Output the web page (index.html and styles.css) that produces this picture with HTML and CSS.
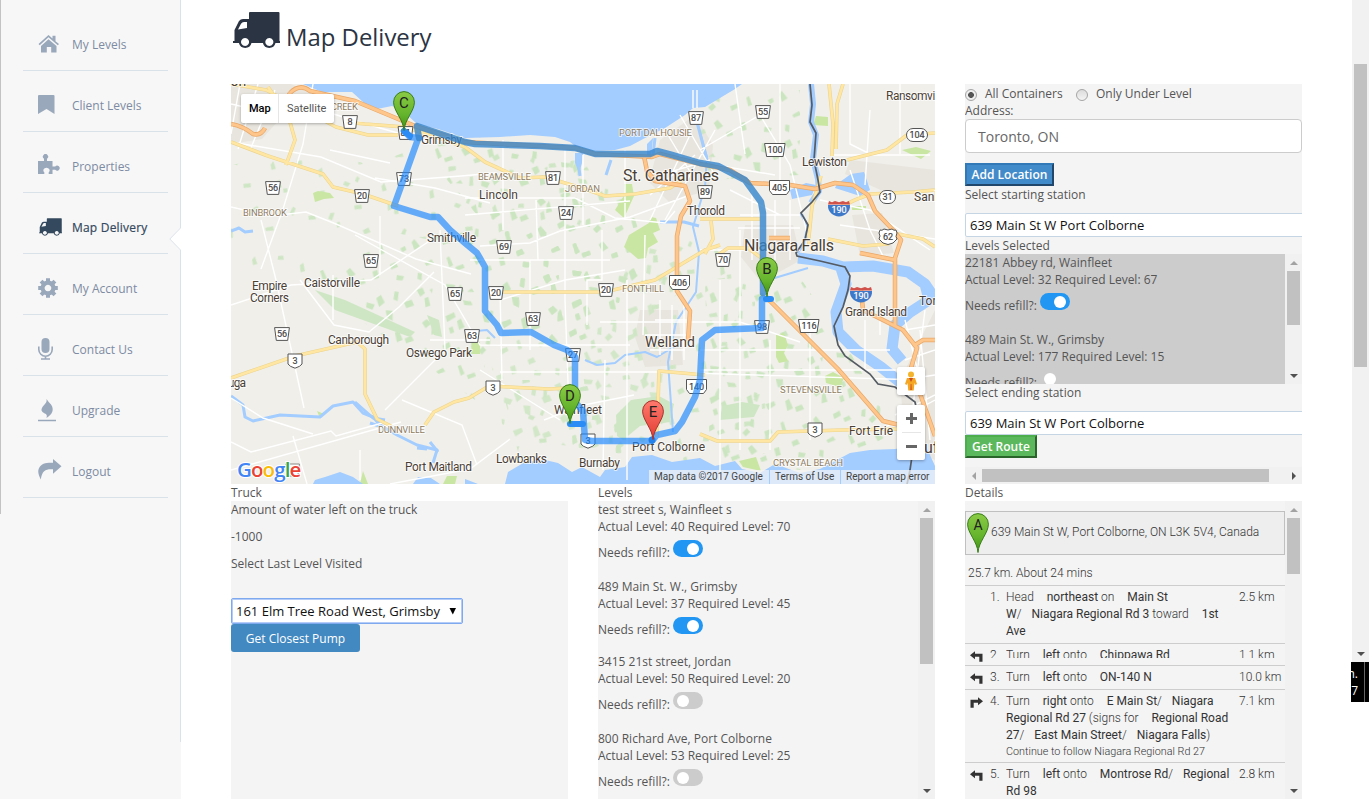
FILE: index.html
```html
<!DOCTYPE html>
<html lang="en">
<head>
<meta charset="utf-8">
<title>Map Delivery</title>
<link rel="stylesheet" href="styles.css">
</head>
<body>
<svg class="defs" width="0" height="0" aria-hidden="true">
  <defs>
    <linearGradient id="gGreen" x1="0" y1="0" x2="0" y2="1"><stop offset="0" stop-color="#8bcb45"/><stop offset=".6" stop-color="#64b32c"/><stop offset="1" stop-color="#3f8f14"/></linearGradient>
    <linearGradient id="gRed" x1="0" y1="0" x2="0" y2="1"><stop offset="0" stop-color="#ff7a6e"/><stop offset="1" stop-color="#e23a30"/></linearGradient>
    <symbol id="pin" viewBox="0 0 22 40" overflow="visible"><path d="M11 39.5C10.500 29 .6 20 .6 11.200a10.400 10.600 0 0 1 20.800 0C21.400 20 11.500 29 11 39.500Z"/></symbol>
    <symbol id="truck" viewBox="0 0 47 38"><path fill-rule="evenodd" d="M17 0h28.500q1 0 1 1v28h1v2h-5a6.500 6.500 0 0 1-12.600 0H18.500a6.500 6.500 0 0 1-12.600 0H0v-2h1.500V18L6 9q1.500-2 4-2h6V1q0-1 1-1zM5 17.500l9-1.500v-6h-3q-2 0-3 1.800zM12 26a4 4 0 1 0 .1 0zm24.300 0a4 4 0 1 0 .1 0z"/></symbol>
    <symbol id="turnL" viewBox="0 0 13 11"><path d="M0 4.300 5 .3v2.400h7.500v8H9.300V5.800H5v2.500z"/></symbol>
  </defs>
</svg>
<div class="page">
  <nav class="sidebar">
    <span class="edge"></span>
    <a class="item"><span class="ico"><svg width="22" height="20"><path d="M.5 10 10.500 1l4 3.500V1.800h3v5.500L21 10l-1.200 1.300-9.300-8-8.800 8zM3 12l7.500-6.800L18.500 12v6.500h-5.300V13H8.800v5.500H3z"/></svg></span>My Levels</a>
    <a class="item"><span class="ico"><svg width="22" height="20"><path d="M1 0h14.500q1 0 1 1v18L8.500 14 0 19V1q0-1 1-1z"/></svg></span>Client Levels</a>
    <a class="item"><span class="ico"><svg class="raise" width="22" height="21"><path d="M0 7h6V4.800a2.600 2.600 0 1 1 3 0V7h5.500v5.500h2.700a2.500 2.500 0 1 1 0 3.200h-2.700V20h-3.800v-1.800q1.300-1 .8-2.700-1-1.800-3-1.800-2.300 0-3 1.800-.5 1.700.8 2.700V20H0z"/></svg></span>Properties</a>
    <a class="item active"><span class="ico"><svg width="23" height="19"><use href="#truck" width="23" height="19"/></svg></span>Map Delivery<svg class="notch" width="12" height="24"><path d="M12 0v24L.7 12z" fill="#fff"/><path d="M11.500 0v1L.8 12l10.700 11v1" fill="none" stroke="#d9e2ea"/></svg></a>
    <a class="item"><span class="ico"><svg width="22" height="20"><g transform="translate(10 10)"><path fill-rule="evenodd" d="M0-7.500a7.500 7.500 0 1 0 .1 0zM0-3.300a3.300 3.300 0 1 1-.1 0z"/><path d="M-2-9.800h4v4h-4zm0 15.600h4v4h-4zM-9.800-2h4v4h-4zm15.600 0h4v4h-4z"/><path transform="rotate(45)" d="M-2-9.800h4v4h-4zm0 15.600h4v4h-4zM-9.800-2h4v4h-4zm15.600 0h4v4h-4z"/></g></svg></span>My Account</a>
    <a class="item"><span class="ico"><svg width="22" height="22"><rect x="3.500" y="0" width="8" height="15" rx="4"/><path d="M.8 8.500v3a6.700 6.700 0 0 0 13.400 0v-3M7.500 18v3M3 21h9" fill="none" stroke="#9aa8bb" stroke-width="1.600"/></svg></span>Contact Us</a>
    <a class="item"><span class="ico"><svg width="22" height="23"><path d="M8.500 0q2 3 4.500 5.500c3.500 5 1.500 10-4.500 13.500q1-2.500-.5-4C4.500 13.500 2.500 12 4 9c1-3 5.500-4.500 4.500-9zM0 20.800h18V22.300H0z"/></svg></span>Upgrade</a>
    <a class="item"><span class="ico"><svg class="raise" width="24" height="21"><path d="M15 0l8.500 7.300L15 14.800v-4.500C8.500 9.800 4 11 2.800 20.500 0 15.500-.8 11 2 7.500 4.500 4 9 3.700 15 3.700z"/></svg></span>Logout</a>
  </nav>

  <main class="main">
    <h1 class="title"><svg width="47" height="38"><use href="#truck" width="47" height="38"/></svg><span>Map Delivery</span></h1>
    <div class="grid">
      <section class="map">
        <svg class="mapsvg" width="704" height="400" viewBox="231 84 704 400">
          <defs>
            <pattern id="vegA" width="127" height="109" patternUnits="userSpaceOnUse" patternTransform="rotate(-6)"><path fill="#cbe5c0" d="M3 5l6-2 2 6-5 3zM10 14l4-1 1 9-5 1zM16 6l3-1-1 5zM33 2l9 2-2 4-7-1zM44 8l3-4 3 7-5 3zM48 20l8 2 1 4-8-1zM53 12l5-3 2 4zM79 12l8 3-3 5-6-3zM89 9l5-3 3 8-6 4zM97 22l7 1-1 10-5-3zM108 4l4 1-2 9-4-2zM116 16l8-2 2 6-8 2zM5 38l5-3 4 5-6 4zM14 43l3-4 2 11-6 1zM29 34l9-3 1 5-9 4zM40 40l4-2 3 9-6 2zM31 46l4-1 1 6-4 1zM66 37l5-2 1 10-5-1zM74 33l3 1-1 5-3-1zM84 46l9-2 1 4-8 4zM104 45l4-2 3 10-6 2zM113 52l7-2 2 5-8 2zM3 66l3-3 5 8-6 3zM23 63l7-3 1 5-7 3zM33 68l6-2 2 4-7 2zM52 62l4-1-1 8-4-1zM58 72l5-4 3 4-5 4zM68 59l3 1-1 8-4-2zM80 73l7-2 1 4-7 3zM97 66l3-1 2 9-4 1zM118 71l5-2 1 4-4 2zM14 88l7-3 2 4-8 2zM6 97l4 1-1 7-4-2zM36 85l3-1 3 9-4 2zM44 95l8-2 1 4-8 2zM62 88l4-3 5 7-6 3zM73 99l6-2 1 5-6 1zM88 91l5-1 1 8-5 1zM106 86l6-2 2 5-7 2zM112 97l7 2-2 4-6-1z"/></pattern>
            <pattern id="vegB" width="113" height="97" patternUnits="userSpaceOnUse" patternTransform="rotate(11)"><path fill="#cfe6c5" d="M6 9l3-3 3 8-4 2zM34 15l6 1-2 4-5-1zM45 8l3 1-1 5-3-1zM71 13l2-4 4 7-4 2zM96 4l5-1 1 4-6 1zM12 29l4-1 2 7-5 1zM48 37l7-2 1 4-7 2zM80 28l3-2 3 7-4 3zM88 34l4-1 1 4-4 1zM5 56l6-2 2 4-7 2zM26 49l4-1-1 8-4-1zM34 57l3-1 1 5-3 1zM61 60l5-4 3 4-5 4zM101 50l3 1-1 8-4-2zM20 78l7-2 1 4-7 3zM43 84l3-1 2 9-4 1zM78 76l7-3 2 4-8 2z"/></pattern>
            <symbol id="reg" viewBox="0 0 16 14"><path d="M.6.6h14.800L13.700 13.400H2.300z" fill="#fff" stroke="#555" stroke-width="1"/></symbol>
            <symbol id="king" viewBox="0 0 16 16"><path d="M1 1h14v10q-1.500 2.500-7 4.200Q2.500 13.500 1 11z" fill="#fff" stroke="#555"/></symbol>
            <symbol id="inter" viewBox="0 0 24 17"><path d="M1 5h22c.5 7-5 11-11 11.500C6 16 .5 12 1 5z" fill="#3e78c9"/><path d="M1 4.500 2 1l3 1.200L8 1l4 1.200L16 1l3 1.200L22 1l1 3.500z" fill="#d0504a"/></symbol>
            <path id="yellow" d="M231 142l37 14 55 18 10 13 30 7 35 12M286 165l9-25-7-25-20-28M231 84l35 6 70 37 32 8 30 0M345 122l20 2 40 3 60 20 20 15 35 16 25-1 40 12 20 7 30-2 35-6 15-10M231 378l64-22 62-14 8 7 0 45 12 25 14 7M425 425l9-13 20-10 15-4 20-12 60 3 20-1M700 434l17 7h53l8-9 65-2 55-1M490 292h115l50-12 50-30 15-5M657 437l2-66 46 4M700 219h60M705 254l8-15-2-18M718 255l10-7h20l20 15M829 84l4 40-1 32M843 84l-6 20-1 45M847 160l40-10 20-15 28-2M935 190l-22 2-43 2-15 6-17 8M935 247l-12-8-25-5-10 10-25 2-35-7M821 176l-9 30-3 30 0 10"/>
            <path id="orange" d="M231 124q12 2 22 10 8 2 12-6M290 93q10-10 20-2l45 10 60 25 50 16 75 4 35 2 20 6 57 3 8-3 40 10 30 6 20 13 40 2 25 4 20-6 18 2 15 10 7 16 18 19 8 10-6 18v68M644 156l3 15 8 10 30 5 5 15-9 15-4 20v55l13 20-2 30M768 299l20 20 50 50 45 52 25 6M861 290l2 20 40 20 14 18-6 20 24 68M915 345l8-5h12M769 238h21M860 253l35 7M290 93l-7 14"/>
          </defs>
          <rect x="231" y="84" width="704" height="400" fill="#f0efea"/>
          <g fill="#e8e5de">
            <path d="M231 84h60l22 10-8 12-18 5-25 28-31 5zM660 140l35-25 18 30-4 45-40 12-20-20zM745 225h48l8 35-40 22-20-25zM640 310h38l5 55-38 2-10-30zM850 160l85 10v20l-50 2-40-18zM900 380l35-70v150l-30-15zM852 215l30-2 12 40-34 3z"/>
          </g>
          <g>
            <path d="M231 165l80-15 60 15 80-30 60 5 80 12 20 50-20 40-70-8-70 10-60-12-70 5-50 15-40-10z" fill="url(#vegB)"/>
            <path d="M310 275l80-35 90-25 110 25-5 110-90-20-20 70-70-50-90-60z" fill="url(#vegA)"/>
            <path d="M400 125l195 30 45 60 5 70-25 30-80-15-50-70z" fill="url(#vegA)"/>
            <path d="M600 270l85-35 70 30v80l30 100-60 25-150-10-20-60z" fill="url(#vegB)"/>
            <path d="M560 210h80l50 75-40 30 25 110-60 25-110-10-20-110z" fill="url(#vegA)" opacity=".8"/>
            <path d="M690 90h110v85l-90 5zM705 280l90-10 60 90 40 75-95 35-90-10z" fill="url(#vegA)"/>
            <path d="M231 220l60 30 40 10-30 20-50-10zM500 380h90l70 80-140 0z" fill="url(#vegB)"/>
          </g>
          <g fill="#cfe6c5"><path d="M616 415l15-15 28-4 15 8-4 18-30 4-17 14-6-4zM722 406l20-4 18 3-6 12-34 3zM315 290l30 10 70 32-5 5-75-27zM427 315l12 5 3 17-8-2z"/></g>
          <g fill="#c9e6a3"><path d="M629 235l20-12 2-6 5 1 4 12-7 3 5 9-10 6-2 10-8 1-14-12zM615 210l10-16-1-10h8l2 12-10 22zM776 335l8-2 4 12-4 8 4 8-9 2-3-6zM825 376l8-4 11 6-4 9-14-4zM902 150l14-3 15 4-10 8zM739 461l17-4 5 14-18-4zM447 476h10l-2 8h-12zM363 471l5 13h-8zM317 411l7 3-4 4zM816 116l12 1v9l-15-1zM313 193l5-2 12 2 4 5-10 1-9 3zM472 342h8v12h-9zM852 206h14v4h-14z"/></g>

          <g fill="#a3ccff">
            <path d="M303 84l19 8h30l10 9 10 9 20-4 10 4 15 14 21 5 27 9 35-1 30-2 25 2 15 5 10 8 15 1 20-1 15-4 15-8 20-10 20-13 8-7 12-1 15-9 15-9 7-5z"/>
            <path d="M505 484l3-12 17-10 20-2 13 3 14 9 10-5 18 10 5-7 20-3 7-10 20-2 20 7 28-4 15 8 20-5 7 8 18 4 15-9 25 9 20-4 30-16 20-3 25-1 30-5 10 22v18z"/>
            <path d="M313 484l2-4 10-3 15-5 13 5 10 7zM413 484l5-7 13 1 9 6zM465 479l13 5h-13zM837 184l14-10 13-2 6 18-10 6-25-8zM790 190l16-7 10 2-4 10-20 4zM575 153h8l-1 10-3 10-4-10zM647 144l6-6-2 20-4-2z"/>
          </g>
          <g fill="none" stroke="#a3ccff" stroke-linejoin="round">
            <path stroke-width="3" d="M231 396l12 9 2 12 8 4 27-6 40 2 13-11 20-4 10 11 10 4 7 8 17 10 20 10 20 5-4 13"/>
            <path stroke-width="3" d="M355 402l18 16 12 2M370 423l12 4M417 448l10 1M430 442l8 10M231 231l8-3 6 4 8-1M611 160l-5 15M578 160l2 16M655 138l-2 17M697 122l10 38M660 222h24l15 4"/>
            <path stroke-width="6" d="M811 84l2 20-2 18 5 13-3 24 5 20 1 12-8 12"/>
            <path stroke-width="3" d="M801 213l7 14-4 17-7 9"/>
            <path stroke-width="11" d="M798 258l25 3 20 6 30-1 35 6 17 12 10 15M841 268l5 16-10 28 2 20 18 18 25 17 25 20M925 284l4 16-20 13-14 12-3 24 10 12"/>
            <path stroke-width="2" d="M697 122l10 35-2 30-12 40 6 25-3 40-20 30-8 40 5 70M495 338l-8-8-22 2M585 360l12 5 18-2 10-8 20-3 12 5 20-12M768 280l40-12"/>
          </g>

          <g fill="none" stroke="#fff" stroke-width="1.400">
            <path d="M231 104l60 14M240 84l-9 50M258 84l-20 65M275 90l-25 60M231 142l90 15 60 25 80-6 34-3M313 84l-10 60-20 65-22 60M231 207l40 9 35-4 30 12 80 35 55 15M320 110l60 18 50 14M330 150l60 13M375 178l60 10 55 15M231 305l60-20 80-5 60-40M261 220l15 60 28 128M300 280l34 45 35 7 30-25 35-35M333 275v45M380 216v59M355 235l90 50 35 60 90 1M440 230l5 120-60 60M430 340h60M231 398l32 20 50 16M231 442l20 10 80-21 5 5 50-14M293 436l14 48M231 470l170-48M390 484l80-15 40-30M402 400l60 25 15 40M480 370l80 50M360 450v30"/>
            <path d="M503 140v90M536 200l2 60M565 150v150l4 110M583 155v70M625 150v70M465 215l165-14M480 246l50-3 30-12 70-14 60-22M465 198h110l40 20 50 5 10-12M500 290l2 90M530 260v90M500 300l65-20 60-10M500 372h160l260 8M602 230v50h-15v45M645 235l-2 100M500 345h130M470 260h140M600 322h140l60 20M627 280v200M544 420l40-15 50-10M605 360l-2 110M720 280v200M740 230v220M700 350h190M700 370h210M810 320v120M770 340v110M700 250h100M700 150l60-35 30 50 20 80M780 84v100M735 84l10 70M715 165l60 10M660 175l50-15M650 195l45-40M680 115l35 60M665 130l30 50M650 220l40-85M665 220l50-90M655 320h35M645 335h45M650 350h35M660 300v55M672 305v55M684 300v60M730 190l50 25M740 215h60M738 228h62M752 190v70M775 200v60M790 200v60M850 170l20 60 15 30M850 84v60l20 10M830 155h100M870 110l-5 75M900 84v70M820 200l50 10 60 40M840 225l95 14M850 310h30v25M865 320v50M905 320l15 60M925 310l-15 120M935 325l-30 5M935 350l-30 10M935 375l-20 3M880 430l55-30M935 395l-40 20M920 330l10 110M693 108v-18M697 108v-18"/>
          </g>
          <g fill="none" stroke-linejoin="round">
            <use href="#yellow" stroke="#ecd38c" stroke-width="3.600"/>
            <use href="#yellow" stroke="#ffe7a3" stroke-width="2.500"/>
            <use href="#orange" stroke="#e9a868" stroke-width="4.500"/>
            <use href="#orange" stroke="#ffc68c" stroke-width="3"/>
          </g>
          <path fill="none" stroke="#555b63" stroke-width="1.700" d="M810 84l2 21-2 17 6 11-2 27 4 20 2 12-8 10-11 11 7 12-3 15-9 13 1 3 23 5 25 6 5 9-2 14-5 17-9 19 4 19 7 11 25 18 8 10 17 3 20 15 3 13-8 55-5 24"/>

          <g font-family="Roboto, sans-serif" font-size="12" fill="#4a4036" stroke="#fff" stroke-width="2" stroke-opacity=".7" paint-order="stroke" stroke-linejoin="round">
            <g font-size="16">
              <text x="623" y="181" textLength="96">St. Catharines</text><text x="744" y="251" textLength="90">Niagara Falls</text><text x="645" y="347" font-size="14" textLength="50">Welland</text><text x="924" y="453">uffalo</text><text x="226" y="86" font-size="14">ton</text>
            </g>
            <text x="421" y="144" textLength="41">Grimsby</text><text x="479" y="199" textLength="39">Lincoln</text><text x="427" y="242" textLength="49">Smithville</text><text x="304" y="287" textLength="56">Caistorville</text><text x="252" y="290" textLength="35">Empire</text><text x="250" y="302" textLength="39">Corners</text><text x="328" y="344" textLength="61">Canborough</text><text x="406" y="357" textLength="66">Oswego Park</text><text x="228" y="387" textLength="18">uga</text><text x="405" y="471" textLength="67">Port Maitland</text><text x="496" y="463" textLength="51">Lowbanks</text><text x="579" y="467" textLength="41">Burnaby</text><text x="554" y="414" textLength="48">Wainfleet</text><text x="632" y="451" textLength="73">Port Colborne</text><text x="687" y="215" textLength="38">Thorold</text><text x="802" y="166" textLength="45">Lewiston</text><text x="886" y="100" textLength="60">Ransomville</text><text x="914" y="201">Sanborn</text><text x="845" y="316" textLength="62">Grand Island</text><text x="919" y="305">Tonawanda</text><text x="849" y="435" textLength="44">Fort Erie</text>
            <g font-size="9.500" fill="#8f7d63">
              <text x="331" y="110" textLength="27">CREEK</text><text x="243" y="216" textLength="44">BINBROOK</text><text x="478" y="180" textLength="53">BEAMSVILLE</text><text x="565" y="192" textLength="35">JORDAN</text><text x="619" y="136" textLength="73">PORT DALHOUSIE</text><text x="622" y="292" textLength="42">FONTHILL</text><text x="378" y="433" textLength="47">DUNNVILLE</text><text x="780" y="393" textLength="62">STEVENSVILLE</text><text x="773" y="466" textLength="70">CRYSTAL BEACH</text>
            </g>
          </g>

          <g>
            <use href="#reg" x="342" y="115" width="16" height="14"/><use href="#reg" x="397" y="126" width="17" height="14"/><use href="#reg" x="396" y="172" width="16" height="14"/><use href="#reg" x="354" y="189" width="16" height="14"/><use href="#reg" x="265" y="181" width="16" height="14"/><use href="#reg" x="363" y="254" width="16" height="14"/><use href="#reg" x="496" y="240" width="16" height="14"/><use href="#reg" x="447" y="287" width="16" height="14"/><use href="#reg" x="488" y="286" width="16" height="14"/><use href="#reg" x="525" y="312" width="16" height="14"/><use href="#reg" x="464" y="329" width="16" height="14"/><use href="#reg" x="565" y="348" width="16" height="14"/><use href="#reg" x="545" y="171" width="16" height="14"/><use href="#reg" x="558" y="206" width="16" height="14"/><use href="#reg" x="688" y="111" width="16" height="14"/><use href="#reg" x="755" y="105" width="16" height="14"/><use href="#reg" x="697" y="185" width="16" height="14"/><use href="#reg" x="715" y="253" width="16" height="14"/><use href="#reg" x="598" y="283" width="16" height="14"/><use href="#reg" x="754" y="320" width="16" height="14"/><use href="#reg" x="274" y="327" width="16" height="14"/>
            <path d="M764.600 143.500h20.500l-2 13h-16.500zM798.500 319.500h20.500l-2 13h-16.500z" fill="#fff" stroke="#555"/>
            <use href="#king" x="287" y="353" width="16" height="16"/><use href="#king" x="485" y="380" width="16" height="16"/><use href="#king" x="580" y="433" width="16" height="16"/><use href="#king" x="807" y="422" width="16" height="16"/><use href="#reg" x="285" y="463" width="15" height="14" opacity=".7"/>
            <path d="M769.500 180.500h20v10l-3 4h-14l-3-4zM669.500 275.500h20v10l-3 4h-14l-3-4zM686.500 379.500h20v10l-3 4h-14l-3-4z" fill="#fff" stroke="#555"/>
            <rect x="906.500" y="128.500" width="21" height="13" rx="6.500" fill="#fff" stroke="#555"/><rect x="879.500" y="190.500" width="16" height="13" rx="6.500" fill="#fff" stroke="#555"/>
            <path d="M880 230q2 1 4-1 4 2 8 0 2 2 4 1l1 3q-2 4 0 6l-4 4-5 1.500-5-1.500-4-4q2-3 0-6z" fill="#fff" stroke="#555"/>
            <use href="#inter" x="827" y="200" width="24" height="17"/><use href="#inter" x="849" y="286" width="24" height="17"/>
          </g>
          <g font-family="Roboto, sans-serif" font-size="9" fill="#444" text-anchor="middle" stroke="#444" stroke-width=".2">
            <text x="350" y="125">8</text><text x="405.500" y="136">81</text><text x="404" y="182">73</text><text x="362" y="199">20</text><text x="273" y="191">56</text><text x="371" y="264">65</text><text x="504" y="250">69</text><text x="455" y="297">65</text><text x="496" y="296">20</text><text x="533" y="322">63</text><text x="472" y="339">63</text><text x="573" y="358">27</text><text x="553" y="181">81</text><text x="566" y="216">24</text><text x="696" y="121">87</text><text x="763" y="115">55</text><text x="705" y="195">89</text><text x="723" y="263">70</text><text x="606" y="293">20</text><text x="762" y="330">98</text><text x="282" y="337">56</text><text x="775" y="153">100</text><text x="809" y="329">116</text><text x="295" y="364">3</text><text x="493" y="391">3</text><text x="588" y="444">3</text><text x="815" y="433">3</text><text x="779.500" y="191">405</text><text x="679.500" y="286">406</text><text x="696.500" y="390">140</text><text x="917" y="138">104</text><text x="887.500" y="200">31</text><text x="888" y="240">62</text>
            <g fill="#fff" stroke="#fff"><text x="839" y="213">190</text><text x="861" y="299">190</text></g>
          </g>
          <g fill="none" stroke="#1e88ff" stroke-linejoin="round" stroke-linecap="round" stroke-width="6.500">
            <path opacity=".67" d="M404 131l6 6 9 1M768 299h-6v29l-47 2-13 10-2 40-5 17-13 25-7 9-18 4-5 6h-60l-7-1-2-29-8-9v-45l-8-7-13-5-23-13-30 1-4-8-12-14V267l-8-14-12-10-15-13-12-13h-8l-36-11 24-67"/>
            <path stroke="#3484cc" opacity=".8" d="M419 138l-2-12 48 16 10 2 65 2 35 2 20 6h55l7-3 15 4 28 8 18 3 27 14 16 22 2 11v80"/>
          </g>
          <path fill="none" stroke="#2b8cf5" stroke-linecap="round" stroke-width="6" d="M404 131l6 5M766 299h5M570 424h13"/><circle cx="652" cy="440" r="3.500" fill="#2582ea"/>
          <g stroke-width="1">
            <g fill="url(#gGreen)" stroke="#387d18"><use href="#pin" x="393" y="91" width="22" height="40"/><use href="#pin" x="756" y="257" width="22" height="40"/><use href="#pin" x="559" y="384" width="22" height="40"/></g>
            <use href="#pin" x="642" y="400" width="22" height="40" fill="url(#gRed)" stroke="#a6322c"/>
          </g>
          <g font-family="Roboto, sans-serif" font-size="15" fill="#222" text-anchor="middle"><text x="404" y="108">C</text><text x="767" y="274">B</text><text x="570" y="401">D</text><text x="653" y="417">E</text></g>
          <text x="237" y="477" font-family="'Open Sans', sans-serif" font-size="20.500" font-weight="600" letter-spacing="-.9" stroke="#fff" stroke-width="2" paint-order="stroke"><tspan fill="#4285f4">G</tspan><tspan fill="#ea4335">o</tspan><tspan fill="#fbbc05">o</tspan><tspan fill="#4285f4">g</tspan><tspan fill="#34a853">l</tspan><tspan fill="#ea4335">e</tspan></text>
        </svg>
        <div class="maptype"><b>Map</b><span>Satellite</span></div>
        <div class="pegman"><svg width="14" height="20" viewBox="0 0 14 20"><circle cx="7" cy="3.500" r="3" fill="#f5b32b"/><path d="M3 7h8l2 6-1.500 1-1-2-.8 7.500H4.300L3.500 12l-1 2L1 13z" fill="#f5a623"/><path d="M5 7h4l-2 4zM6.700 13h.7l.3 6H6.400z" fill="#c74a25"/></svg></div>
        <div class="zoomer"><i class="plus"></i><i class="rule"></i><i class="minus"></i></div>
        <div class="credits"><span>Map data ©2017 Google</span><span>Terms of Use</span><span>Report a map error</span></div>
      </section>

      <section class="form">
        <div class="radios"><i class="radio on"></i><span class="r1">All Containers</span><i class="radio"></i><span>Only Under Level</span></div>
        <div>Address:</div>
        <div class="input">Toronto, ON</div>
        <div class="btn blue">Add Location</div>
        <div class="start">Select starting station</div>
        <div class="select wide">639 Main St W Port Colborne</div>
        <div>Levels Selected</div>
        <div class="selected">
          <div class="scrolled">
            <div class="level"><div>22181 Abbey rd, Wainfleet</div><div>Actual Level: 32 Required Level: 67</div><div class="refill">Needs refill?: <i class="toggle on"></i></div></div>
            <div class="level"><div>489 Main St. W., Grimsby</div><div>Actual Level: 177 Required Level: 15</div><div class="refill">Needs refill?: <i class="toggle"></i></div></div>
          </div>
          <div class="vbar"><i class="up"></i><i class="thumb t54"></i><i class="down"></i></div>
        </div>
        <div>Select ending station</div>
        <div class="select wide">639 Main St W Port Colborne</div>
        <div class="btn green">Get Route</div>
        <div class="hbar"><i class="left"></i><i class="hthumb"></i><i class="right"></i></div>
      </section>

      <section class="col">
        <div>Truck</div>
        <div class="panel truck">
          <p>Amount of water left on the truck</p><p>-1000</p><p>Select Last Level Visited</p>
          <div class="select focus">161 Elm Tree Road West, Grimsby<svg width="8" height="7"><path d="M.5 0h6.500L3.800 6.500z"/></svg></div>
          <div class="pump">Get Closest Pump</div>
        </div>
      </section>

      <section class="col">
        <div>Levels</div>
        <div class="panel split">
          <div class="scrolled">
            <div class="level"><div>test street s, Wainfleet s</div><div>Actual Level: 40 Required Level: 70</div><div class="refill">Needs refill?: <i class="toggle on"></i></div></div>
            <div class="level short"><div>489 Main St. W., Grimsby</div><div>Actual Level: 37 Required Level: 45</div><div class="refill">Needs refill?: <i class="toggle on"></i></div></div>
            <div class="level"><div>3415 21st street, Jordan</div><div>Actual Level: 50 Required Level: 20</div><div class="refill">Needs refill?: <i class="toggle"></i></div></div>
            <div class="level"><div>800 Richard Ave, Port Colborne</div><div>Actual Level: 53 Required Level: 25</div><div class="refill">Needs refill?: <i class="toggle"></i></div></div>
          </div>
          <div class="vbar"><i class="up"></i><i class="thumb t146"></i><i class="down"></i></div>
        </div>
      </section>

      <section class="col">
        <div>Details</div>
        <div class="panel split">
          <div class="scrolled directions">
            <div class="stop"><svg width="22" height="40"><use href="#pin" width="22" height="40" fill="url(#gGreen)" stroke="#387d18"/><text x="11" y="17" text-anchor="middle" font-size="14" fill="#222">A</text></svg><span>639 Main St W, Port Colborne, ON L3K 5V4, Canada</span></div>
            <div class="summary">25.7 km. About 24 mins</div>
            <div class="step"><span class="turn"></span><span class="num">1.</span><span class="txt">Head <b>northeast</b> on <b>Main St<br></b><b class="flush">W</b>/<b>Niagara Regional Rd 3</b> toward <b>1st<br></b><b class="flush">Ave</b></span><span class="dist">2.5 km</span></div>
            <div class="step cut"><span class="turn"><svg width="13" height="11"><use href="#turnL"/></svg></span><span class="num">2.</span><span class="txt">Turn <b>left</b> onto <b>Chippawa Rd</b></span><span class="dist">1.1 km</span></div>
            <div class="step"><span class="turn"><svg width="13" height="11"><use href="#turnL"/></svg></span><span class="num">3.</span><span class="txt">Turn <b>left</b> onto <b>ON-140 N</b></span><span class="dist">10.0 km</span></div>
            <div class="step"><span class="turn flip"><svg width="13" height="11"><use href="#turnL"/></svg></span><span class="num">4.</span><span class="txt">Turn <b>right</b> onto <b>E Main St</b>/<b>Niagara<br></b><b class="flush">Regional Rd 27</b> (signs for <b>Regional Road<br></b><b class="flush">27</b>/<b>East Main Street</b>/<b>Niagara Falls</b>)<small>Continue to follow Niagara Regional Rd 27</small></span><span class="dist">7.1 km</span></div>
            <div class="step"><span class="turn"><svg width="13" height="11"><use href="#turnL"/></svg></span><span class="num">5.</span><span class="txt">Turn <b>left</b> onto <b>Montrose Rd</b>/<b>Regional<br></b><b class="flush">Rd 98</b></span><span class="dist">2.8 km</span></div>
          </div>
          <div class="vbar"><i class="up"></i><i class="thumb t56"></i><i class="down"></i></div>
        </div>
      </section>
    </div>
  </main>
  <aside class="pagebar"><div class="track"><i class="bigthumb"></i><i class="down"></i></div><div class="clock"><span>n.</span><span>7</span></div></aside>
</div>
</body>
</html>
```
FILE: styles.css
```css
* { box-sizing: border-box; }
body { margin: 0; background: #fff; color: #555; font: 12px/17px "Open Sans", sans-serif; overflow: hidden; }
.defs { position: absolute; }
svg { display: block; }
i { font-style: normal; }
.page { display: flex; width: 1369px; height: 799px; overflow: hidden; }

/* sidebar */
.sidebar { position: relative; flex: none; width: 181px; height: 799px; padding: 10px 13px 0 23px; background: linear-gradient(#d9e2ea, #d9e2ea) right top / 1px 742px no-repeat #f7f7f7; }
.edge { position: absolute; left: 0; top: 0; width: 1px; height: 514px; background: #c3c3c3; }
.item { position: relative; display: flex; align-items: center; height: 61px; padding: 8px 0 0 15px; border-bottom: 1px solid #d9e1e9; color: #7d8ba3; white-space: nowrap; }
.ico { width: 34px; }
.ico svg { fill: #9aa8bb; }
.ico .raise { margin-top: -3px; }
.active { color: #34495e; font-weight: 500; letter-spacing: .2px; -webkit-text-stroke: .2px #34495e; }
.active .ico svg { fill: #34495e; margin-left: 1px; }
.notch { position: absolute; right: -13px; top: 34px; }

/* content */
.main { width: 1170px; padding-left: 50px; flex: none; }
.title { display: flex; align-items: flex-start; gap: 6px; height: 84px; margin: 0; padding: 12px 0 0 2px; color: #2b3443; font-size: 23.900px; font-weight: 400; line-height: 50px; }
.title svg { fill: #2b3443; }
.grid { display: grid; grid-template-columns: 337px 337px 337px; grid-template-rows: 400px 315px; column-gap: 30px; }
.map { grid-column: span 2; position: relative; width: 704px; height: 400px; overflow: hidden; font-family: Roboto, sans-serif; }
.maptype { position: absolute; left: 10px; top: 10px; display: flex; height: 29px; background: #fff; border-radius: 2px; box-shadow: 0 1px 3px rgba(0,0,0,.3); line-height: 29px; font-size: 11px; color: #565656; }
.maptype b { width: 38px; padding-left: 8px; color: #000; font-weight: 500; border-right: 1px solid #e6e6e6; }
.maptype span { width: 55px; padding-left: 8px; }
.pegman, .zoomer { position: absolute; right: 10px; width: 28px; background: #fff; border-radius: 2px; box-shadow: 0 1px 3px rgba(0,0,0,.3); display: flex; align-items: center; }
.pegman { top: 283px; height: 28px; justify-content: center; }
.zoomer { top: 321px; height: 55px; flex-direction: column; justify-content: space-between; padding: 8px 0; }
.plus, .minus { width: 11px; height: 11px; background: linear-gradient(#666, #666) center / 11px 3px no-repeat; }
.plus { background: linear-gradient(#666, #666) center / 11px 3px no-repeat, linear-gradient(#666, #666) center / 3px 11px no-repeat; }
.rule { width: 19px; height: 1px; background: #e6e6e6; }
.credits { position: absolute; right: 0; bottom: 0; display: flex; height: 14px; line-height: 14px; font-size: 10px; color: #444; background: rgba(245,245,245,.7); white-space: nowrap; }
.credits span { padding-left: 5px; border-right: 1px solid #a3ccff; }
.credits span:nth-child(1) { width: 121px; }
.credits span:nth-child(2) { width: 71px; }
.credits span:nth-child(3) { width: 94px; border: 0; }

.form { width: 337px; height: 400px; background: #f4f4f4; overflow: hidden; display: flex; flex-direction: column; }
.form > div { flex: none; }
.radios { display: flex; align-items: center; height: 18px; }
.radio { width: 12px; height: 12px; margin: 3px 8px 0 0; border: 1px solid #a5a5a5; border-radius: 50%; background: linear-gradient(#dcdcdc, #f4f4f4); }
.radio.on { background: radial-gradient(circle, #555 0 2.600px, #eee 3.200px); }
.r1 { width: 91px; }
.input { height: 34px; padding: 0 12px; border: 1px solid #ccc; border-radius: 4px; background: #fff; font-size: 14px; line-height: 34px; color: #666; }
.btn { display: flex; align-items: center; justify-content: center; height: 23px; color: #fff; font-weight: 600; border: 2px solid; }
.blue { width: 89px; margin-top: 10px; background: #428bca; border-color: #3279b7 #21486b #21486b #3279b7; }
.green { width: 72px; background: #5cb85c; border-color: #4cae4c #2b642b #2b642b #4cae4c; }
.select { height: 24px; padding-left: 4px; background: #fff; border: 1px solid #c5d5e4; border-radius: 2px; color: #111; font-size: 13px; line-height: 23px; white-space: nowrap; }
.wide { width: 345px; margin-top: 10px; }
.start { height: 17px; }
.selected, .split { display: flex; }
.selected { height: 130px; background: #ccc; }
.scrolled { flex: 1; overflow: hidden; }
.level { height: 77px; }
.level.short { height: 75px; }
.refill { display: flex; height: 26px; line-height: 36px; }
.toggle { display: block; width: 30px; height: 17px; margin: 5px 0 0 3px; padding: 2.500px 0 0 4px; border-radius: 9px; background: #ccc; }
.toggle::before { content: ""; display: block; width: 12px; height: 12px; border-radius: 50%; background: #fff; }
.toggle.on { padding-left: 14px; background: #2196f3; }
.vbar { width: 17px; flex: none; display: flex; flex-direction: column; align-items: center; background: #f1f1f1; }
.thumb { width: 13px; background: #c1c1c1; }
.t54 { height: 54px; }
.t56 { height: 56px; }
.t146 { height: 146px; }
.up, .down, .left, .right { width: 17px; height: 17px; display: flex; align-items: center; justify-content: center; }
.up::before, .down::before, .left::before, .right::before { content: ""; border: 4px solid transparent; }
.up::before { border-bottom-color: #a3a3a3; border-top: 0; }
.down { margin-top: auto; }
.down::before { border-top-color: #505050; border-bottom: 0; }
.left::before { border-right-color: #a3a3a3; border-left: 0; }
.right { margin-left: auto; }
.right::before { border-left-color: #505050; border-right: 0; }
.hbar { display: flex; align-items: center; height: 17px; margin-top: auto; background: #f1f1f1; }
.hthumb { width: 287px; height: 13px; background: #c1c1c1; }

.panel { height: 298px; background: #f4f4f4; overflow: hidden; }
.truck p { margin: 0 0 10px; }
.focus { display: flex; align-items: center; justify-content: space-between; width: 232px; height: 26px; margin-top: 26px; padding-right: 5px; border: 1px solid #7ea9ef; box-shadow: inset 0 0 0 1px #b3cdf8; }
.pump { width: 129px; height: 28px; border-radius: 3px; background: #4289c1; color: #fff; font-weight: 500; line-height: 29px; text-align: center; }

/* directions */
.directions { font-family: Roboto, sans-serif; font-weight: 300; color: #333; }
.directions b { font-weight: 400; padding-left: 10px; }
.directions b.flush { padding-left: 0; }
.stop { display: flex; align-items: center; height: 44px; margin-top: 10px; padding: 0 0 1px 1px; border: 1px solid silver; background: #eee; }
.stop span { margin-left: 2px; }
.stop text { font-weight: 400; }
.summary { height: 30px; padding: 10px 3px 0; }
.step { display: flex; padding: 3px 0 3px 5px; border-top: 1px solid #cdcdcd; white-space: nowrap; }
.turn { width: 20px; padding-top: 4px; fill: #333; }
.flip svg { transform: scaleX(-1); }
.num { width: 16px; }
.txt { width: 233px; }
.txt small { display: block; font-size: 10.800px; line-height: 15px; }
.cut { height: 22px; }
.cut .num, .cut .txt, .cut .dist { height: 11px; overflow: hidden; line-height: 16px; }

/* page scrollbar */
.pagebar { width: 18px; flex: none; height: 799px; }
.track { display: flex; flex-direction: column; align-items: center; width: 17px; height: 662px; margin-left: 1px; padding-top: 64px; background: #f1f1f1; }
.bigthumb { width: 13px; height: 303px; background: #c1c1c1; }
.clock { display: flex; flex-direction: column; height: 40px; padding-top: 3px; background: linear-gradient(#666, #666) 13px 0 / 1px 40px no-repeat #000; color: #fff; overflow: hidden; }
.clock span { display: flex; justify-content: flex-end; width: 7px; line-height: 17px; overflow: hidden; }
```
